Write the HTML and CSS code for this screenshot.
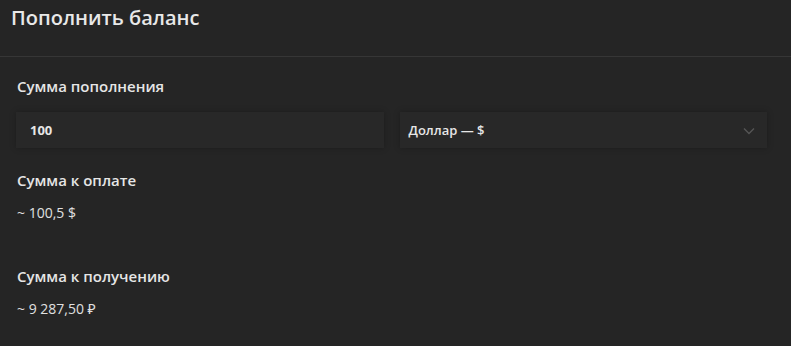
FILE: index.html
```html
<!DOCTYPE html>
<html lang="ru">
<head>
<meta charset="utf-8">
<link rel="stylesheet" href="styles.css">
</head>
<body>
<div class="modal">
  <header class="modal-head">
    <h1 class="modal-title">Пополнить баланс</h1>
  </header>
  <section class="modal-body">
    <div class="field">
      <div class="label">Сумма пополнения</div>
      <div class="row">
        <div class="input"><span class="input-val">100</span></div>
        <div class="input select"><span class="select-val">Доллар — $</span>
          <svg class="chev" width="12" height="8" viewBox="0 0 12 8"><path d="M1 1.5 L6 6.5 L11 1.5" fill="none" stroke="#555" stroke-width="1.4"/></svg>
        </div>
      </div>
    </div>
    <div class="field pay">
      <div class="label">Сумма к оплате</div>
      <div class="value">~ 100,5 $</div>
    </div>
    <div class="field receive">
      <div class="label">Сумма к получению</div>
      <div class="value">~ 9 287,50 ₽</div>
    </div>
  </section>
</div>
</body>
</html>
```
FILE: styles.css
```css
html, body {
  margin: 0;
  padding: 0;
  background: #252525;
}
body {
  font-family: "Open Sans", "Noto Sans", sans-serif;
  color: #e4e4e4;
  width: 791px;
  height: 346px;
  overflow: hidden;
}
.modal-head {
  height: 57px;
  border-bottom: 1px solid #363636;
  box-sizing: border-box;
  padding: 4px 0 0 11px;
}
.modal-title {
  margin: 0;
  font-size: 20px;
  font-weight: 600;
  line-height: 28px;
  color: #e8e8e8;
}
.modal-body {
  padding: 19px 24px 0 17px;
  display: flex;
  flex-direction: column;
}
.label {
  font-size: 15px;
  font-weight: 600;
  line-height: 21px;
  color: #e6e6e6;
}
.row {
  display: grid;
  grid-template-columns: 1fr 1fr;
  gap: 16px;
  margin-top: 15px;
  margin-left: -1px;
}
.input {
  height: 36px;
  background: #282828;
  box-shadow: 0 0 6px rgba(0,0,0,0.25);
  display: flex;
  align-items: center;
  padding: 0 14px;
  font-size: 13px;
  font-weight: 700;
  color: #e6e6e6;
}
.select {
  justify-content: space-between;
  padding: 0 12px 0 9px;
}
.select-val { font-weight: 600; }
.chev { margin-top: 1px; }
.pay { margin-top: 22px; }
.receive { margin-top: 44px; }
.value {
  font-size: 14px;
  line-height: 19px;
  margin-top: 12px;
  color: #e0e0e0;
}
```
